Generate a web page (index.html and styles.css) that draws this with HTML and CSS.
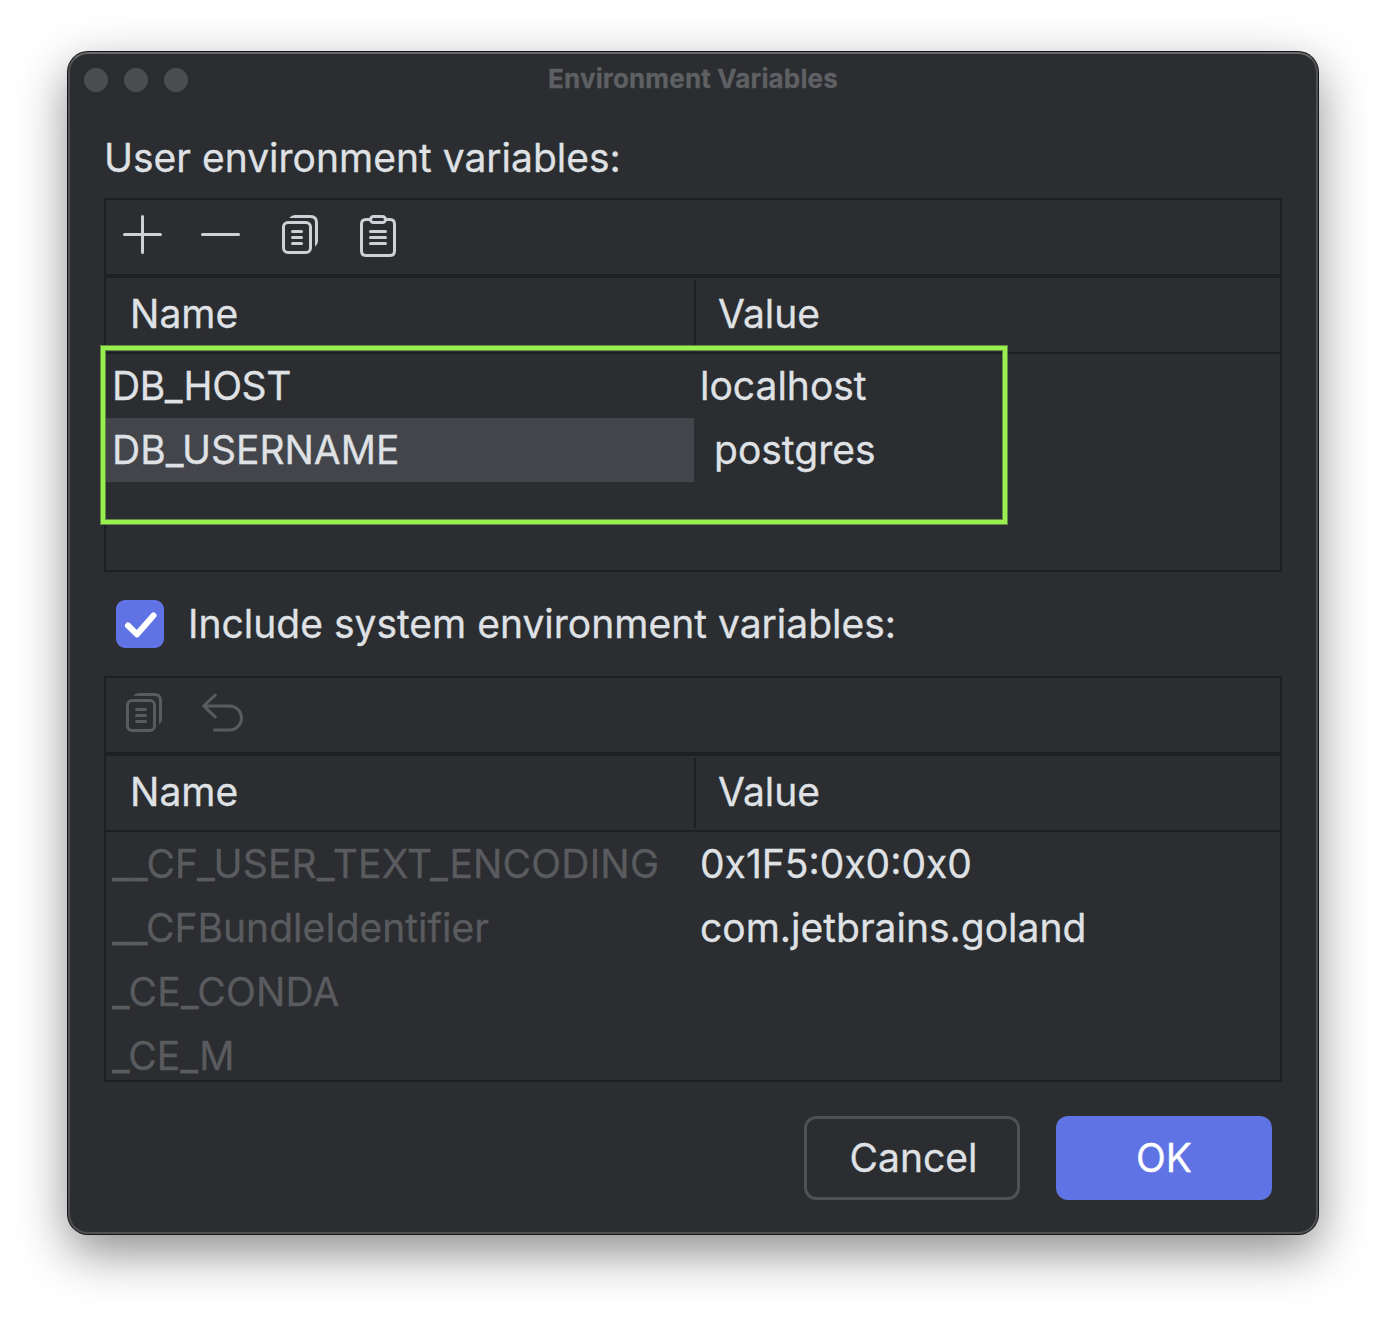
FILE: index.html
```html
<!DOCTYPE html>
<html lang="en">
<head>
<meta charset="utf-8">
<title>Environment Variables</title>
<link rel="stylesheet" href="styles.css">
</head>
<body>
<svg class="defs" aria-hidden="true">
  <symbol id="copy" viewBox="0 0 48 48">
    <rect x="7.5" y="13.5" width="27" height="30" rx="4.5"/>
    <path d="M16.500 22.500h9M16.500 28.500h9M16.500 34.500h9"/>
    <path class="solid" d="M13.200 9Q15.500 6 19 6H34.500Q42 6 42 13.500V32Q42 35.500 39 37.800V13.500Q39 9 34.500 9Z"/>
  </symbol>
</svg>
<main class="dialog">
  <header class="titlebar">
    <div class="lights"><i class="light"></i><i class="light"></i><i class="light"></i></div>
    <h1 class="title">Environment Variables</h1>
  </header>
  <div class="label">User environment variables:</div>
  <section class="panel user">
    <div class="toolbar">
      <svg class="icon" viewBox="0 0 48 48"><path d="M4.500 25.500h36M22.500 7.500v36"/></svg>
      <svg class="icon" viewBox="0 0 48 48"><path d="M4.500 25.500h36"/></svg>
      <svg class="icon"><use href="#copy"/></svg>
      <svg class="icon" viewBox="0 0 48 48"><path d="M16.500 10.500H12Q7.500 10.500 7.500 15V42Q7.500 46.500 12 46.500H36Q40.500 46.500 40.500 42V15Q40.500 10.500 36 10.500H31.500M16.500 22.500h15M16.500 28.500h15M16.500 34.500h15"/><rect x="16.500" y="7.500" width="15" height="6" rx="3"/></svg>
    </div>
    <div class="head"><div class="th">Name</div><div class="th">Value</div></div>
    <div class="rows">
      <div class="row"><div class="td tight">DB_HOST</div><div class="td">localhost</div></div>
      <div class="row"><div class="td selected">DB_USERNAME</div><div class="td indent">postgres</div></div>
    </div>
    <div class="highlight"></div>
  </section>
  <div class="check-row">
    <svg class="checkbox" viewBox="0 0 48 48"><path d="M12 25.500L21 34.300L37.500 15.500"/></svg>
    <span>Include system environment variables:</span>
  </div>
  <section class="panel system">
    <div class="toolbar disabled">
      <svg class="icon"><use href="#copy"/></svg>
      <svg class="icon" viewBox="0 0 48 48"><path d="M17.300 8L5.700 19L17.300 30M5.700 19H31.500A12 12 0 0 1 31.500 43H16.500"/></svg>
    </div>
    <div class="head"><div class="th">Name</div><div class="th">Value</div></div>
    <div class="rows muted">
      <div class="row"><div class="td wide">__CF_USER_TEXT_ENCODING</div><div class="td">0x1F5:0x0:0x0</div></div>
      <div class="row"><div class="td">__CFBundleIdentifier</div><div class="td">com.jetbrains.goland</div></div>
      <div class="row"><div class="td wide">_CE_CONDA</div><div class="td"></div></div>
      <div class="row"><div class="td">_CE_M</div><div class="td"></div></div>
    </div>
  </section>
  <footer class="actions">
    <button class="btn cancel">Cancel</button>
    <button class="btn primary">OK</button>
  </footer>
</main>
</body>
</html>
```
FILE: styles.css
```css
* { box-sizing: border-box; }
body {
  margin: 0;
  height: 1318px;
  padding: 52px 68px 84px;
  overflow: hidden;
  background: #fff;
  color: #dfe1e5;
  font: 400 39px/64px Inter, "Liberation Sans", sans-serif;
  -webkit-text-stroke: .3px currentColor;
}
.defs { display: none; }
.dialog {
  width: 1250px;
  height: 1182px;
  display: flex;
  flex-direction: column;
  padding: 0 34px;
  border: 2px solid #505154;
  border-top-color: #68696b;
  border-radius: 20px;
  background: #2b2d30;
  box-shadow: 0 0 0 1px #141516, 0 18px 50px rgba(0, 0, 0, .46);
}
.titlebar {
  display: grid;
  grid-template-columns: 1fr auto 1fr;
  align-items: center;
  height: 52px;
  margin: 0 -20px;
}
.lights { display: flex; gap: 16px; }
.light { width: 24px; height: 24px; border-radius: 50%; background: #4b4c4e; }
.title {
  margin: 0;
  padding-bottom: 2px;
  font-size: 26px;
  font-weight: 700;
  line-height: 50px;
  letter-spacing: .15px;
  color: #5f6063;
}
.label { height: 92px; padding-top: 20px; }
.panel {
  position: relative;
  display: flex;
  flex-direction: column;
  width: 1178px;
  border: 2px solid #1e1f22;
}
.user { height: 374px; }
.system { height: 406px; }
.toolbar {
  display: flex;
  gap: 30px;
  flex: none;
  height: 78px;
  padding: 9px 14px;
  border-bottom: 4px solid #1e1f22;
  color: #ced0d6;
}
.toolbar.disabled { color: #5a5b5d; }
.icon {
  width: 48px;
  height: 48px;
  fill: none;
  stroke: currentColor;
  stroke-width: 3;
  stroke-linecap: round;
  stroke-linejoin: round;
}
.solid { fill: currentColor; stroke: none; }
.head {
  display: grid;
  grid-template-columns: 590px 1fr;
  flex: none;
  height: 76px;
  padding: 2px 0;
  border-bottom: 2px solid #1e1f22;
}
.th { padding-left: 22px; line-height: 68px; }
.th:first-child { padding-left: 24px; border-right: 2px solid #1e1f22; }
.rows { flex: 1; min-height: 0; overflow: hidden; }
.row { display: grid; grid-template-columns: 588px 1fr; height: 64px; }
.td { padding-left: 6px; white-space: nowrap; }
.tight { letter-spacing: -.4px; }
.selected { background: #43454a; }
.indent { padding-left: 20px; }
.muted .td:first-child { color: #5a5b5f; }
.wide { letter-spacing: .2px; }
.highlight {
  position: absolute;
  left: -5px;
  top: 146px;
  width: 906px;
  height: 178px;
  border: 4px solid #9aef50;
  box-shadow: 0 0 0 1px #629040, inset 0 0 0 1px #629040;
}
.check-row { display: flex; align-items: center; gap: 24px; height: 104px; padding-left: 12px; }
.checkbox {
  width: 48px;
  height: 48px;
  border-radius: 9px;
  background: #5f73e5;
  fill: none;
  stroke: #fff;
  stroke-width: 6;
  stroke-linecap: round;
  stroke-linejoin: round;
}
.actions { display: flex; justify-content: flex-end; gap: 36px; padding: 34px 10px 0 0; }
.btn {
  width: 216px;
  height: 84px;
  padding: 0;
  border: 3px solid #4e5053;
  border-radius: 12px;
  background: transparent;
  color: inherit;
  font: inherit;
}
.cancel { padding-left: 3px; }
.primary { border: 0; background: #5f73e5; color: #fff; }
```
